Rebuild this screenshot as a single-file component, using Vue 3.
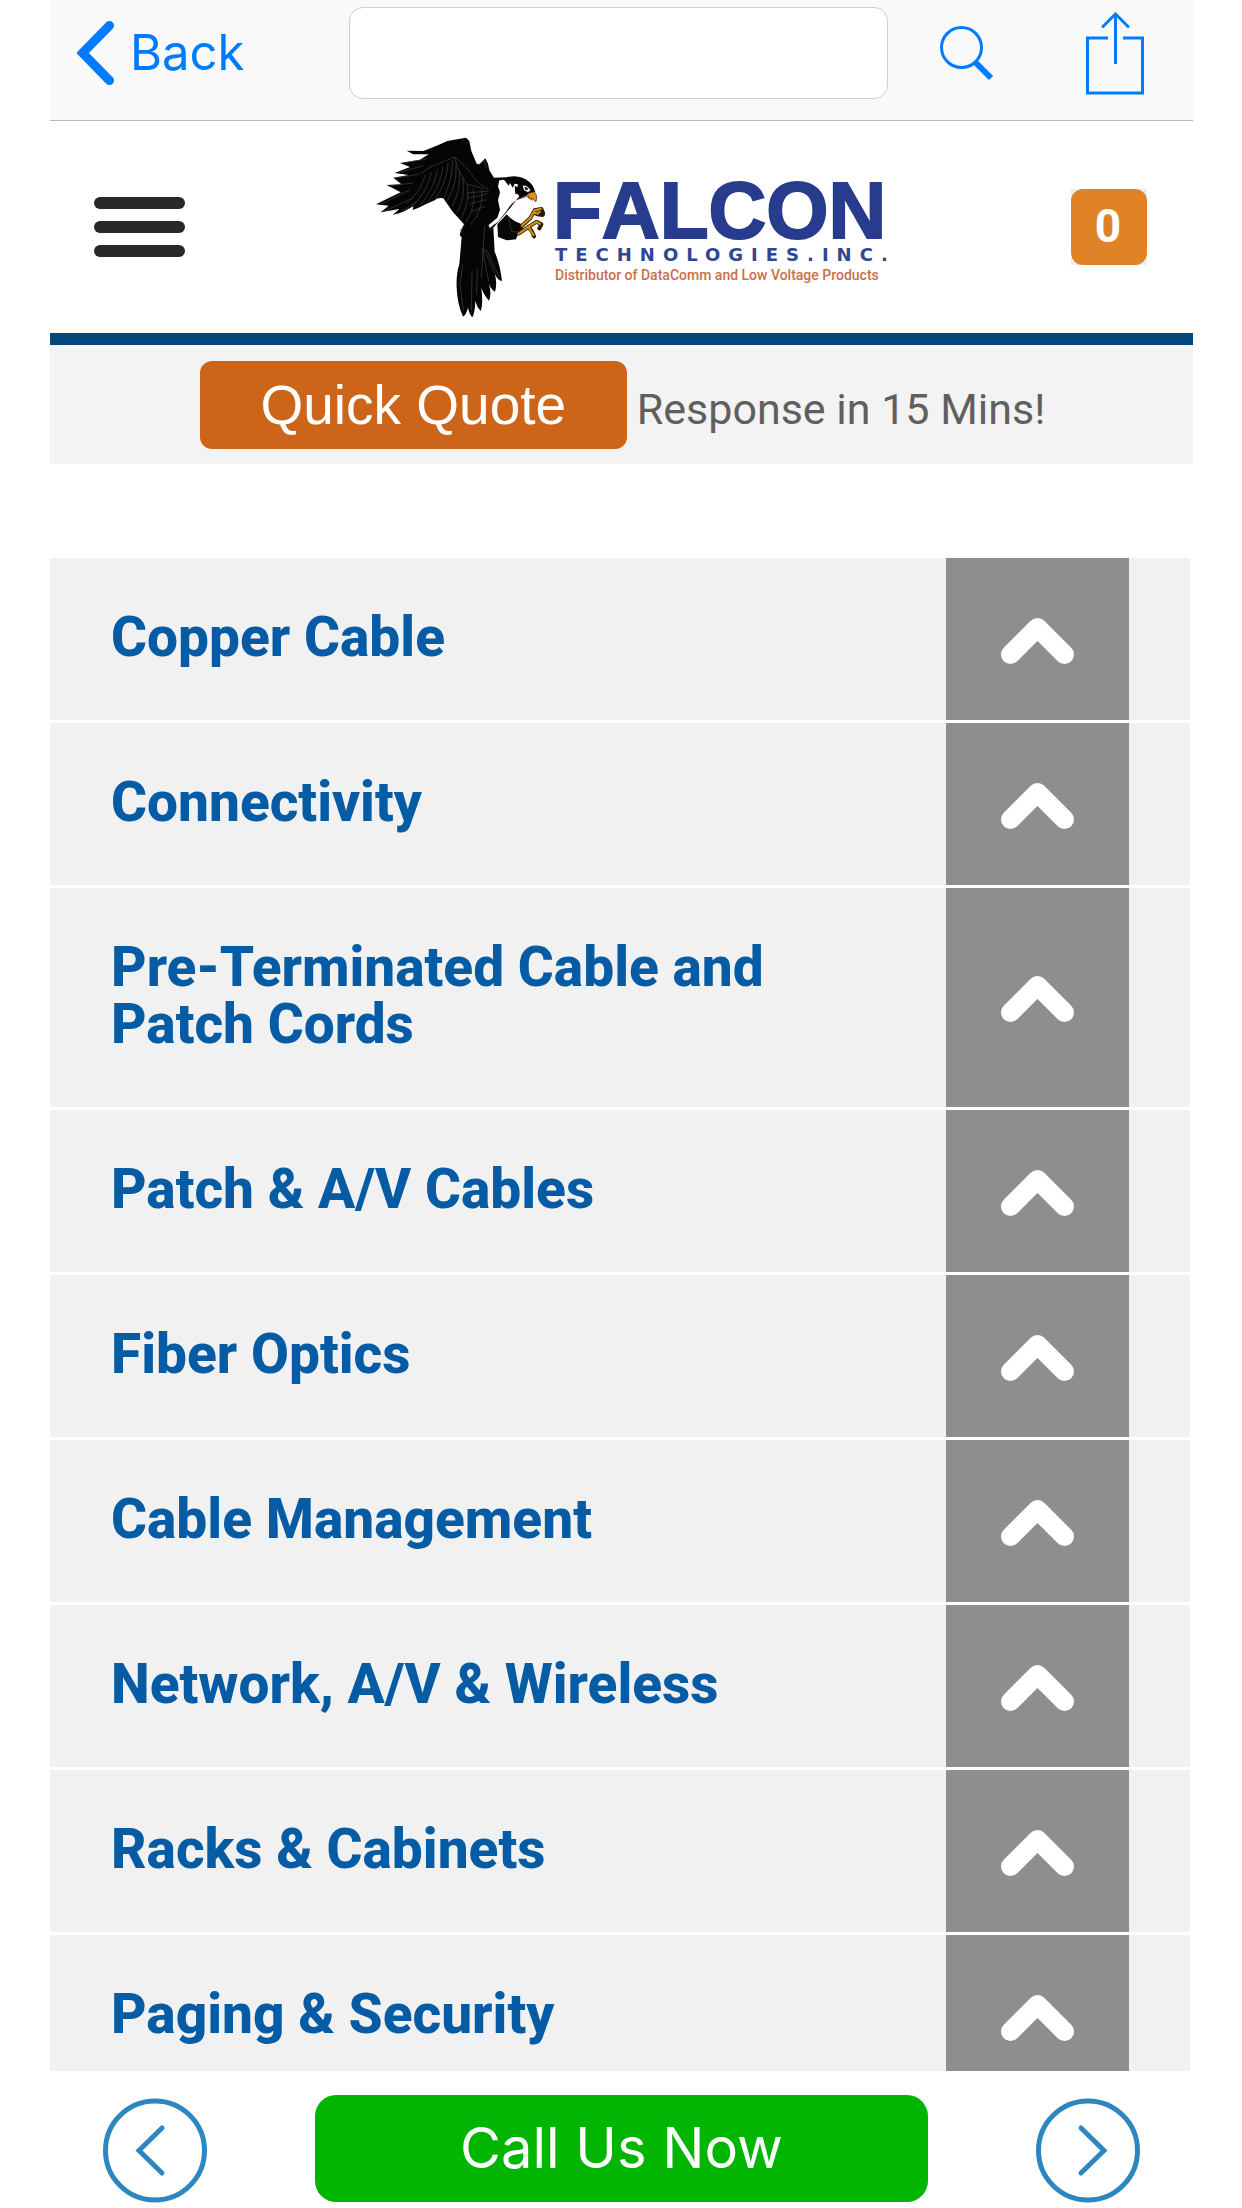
<script setup>
import { ref } from 'vue'

const query = ref('')
const cartCount = ref(0)
const categories = ref([
  'Copper Cable',
  'Connectivity',
  'Pre-Terminated Cable and Patch Cords',
  'Patch & A/V Cables',
  'Fiber Optics',
  'Cable Management',
  'Network, A/V & Wireless',
  'Racks & Cabinets',
  'Paging & Security',
])
</script>

<template>
  <div class="shell">
    <nav class="toolbar">
      <a class="back" href="#">
        <svg width="37" height="64" viewBox="0 0 37 64" aria-hidden="true">
          <path d="M32.500 4.500L5.500 32L32.500 59.500" fill="none" stroke="#007aff" stroke-width="9" stroke-linecap="round" />
        </svg>
        <span>Back</span>
      </a>
      <input v-model="query" class="field" type="text" aria-label="Address" />
      <button class="icon-btn" type="button" aria-label="Search">
        <svg width="54" height="55" viewBox="0 0 54 55" aria-hidden="true">
          <circle cx="21.500" cy="21.500" r="20" fill="none" stroke="#007aff" stroke-width="3" />
          <path d="M35 36L51 52" stroke="#007aff" stroke-width="6" />
        </svg>
      </button>
      <button class="icon-btn share" type="button" aria-label="Share">
        <svg width="58" height="83" viewBox="0 0 58 83" fill="none" stroke="#007aff" stroke-width="3" aria-hidden="true">
          <path d="M22 26H1.500V81H56.500V26H37M29.500 2V52" />
          <path d="M17 14.500L29.500 2L42 14.500" stroke-linecap="round" />
        </svg>
      </button>
    </nav>

    <main class="page">
      <header class="masthead">
        <button class="menu" type="button" aria-label="Menu">
          <i></i><i></i><i></i>
        </button>
        <a class="logo" href="#">
          <svg class="bird" width="170" height="182" viewBox="45 35 510 546" aria-hidden="true">
            <path d="M318 40L328 50L334 80L350 118L358 120L376 102L384 118L388 138L402 160L440 159Q470 150 496 164Q520 178 526 204L498 214L470 226L440 264L412 296L400 310L404 382Q420 420 426 470Q414 470 405 450Q412 480 405 502Q392 496 386 476Q396 510 387 529Q370 510 364 490Q370 540 362 560Q350 548 346 530Q345 565 337 579Q328 570 324 550Q318 572 309 577Q292 540 290 490Q288 450 298 420L305 338Q296 336 302 322L312 300L300 286L278 262L250 222Q234 218 224 228L200 238L176 250L158 257L160 246L130 262L98 272L118 254L62 264L86 244L48 240L80 224L122 204L80 182L124 180L100 160L146 152L104 146L150 128L120 116L180 106L206 90L160 90L140 79L190 80L230 64L262 50Z" fill="#050505" />
            <path d="M412 300L440 270Q456 290 486 300L492 322L474 330L468 345L440 348L414 338Z" fill="#080808" />
            <path d="M418 168L432 166L446 184L450 176L458 190L464 178L474 180L468 204L478 216L470 226Q450 240 440 260L414 292L388 312L386 302L412 280L420 256L414 228L420 204L414 186Z" fill="#fff" />
            <path d="M464 184L482 194L480 206L466 210" fill="#050505" />
            <path d="M488 184Q502 182 512 198L504 204L492 198Z" fill="#e9e9e9" />
            <path d="M494 188Q504 188 504 196L496 197Z" fill="#111" />
            <path d="M502 208L522 202Q534 212 528 232Q520 222 506 220Z" fill="#d9931d" stroke="#3a2605" stroke-width="2" />
            <path d="M470 226L500 216L518 228" fill="none" stroke="#7b3412" stroke-width="3" />
            <g fill="none" stroke-linecap="round" stroke-linejoin="round">
              <path d="M486 304L512 280L524 258L544 254L550 268M520 264L532 270L548 272M476 328L508 306L530 292L544 300L538 312M506 308L516 322L522 336" stroke="#2b1c04" stroke-width="12" />
              <path d="M486 304L512 280L524 258L542 254M520 264L534 268M476 328L508 306L530 292L540 298M506 308L514 322L520 332" stroke="#c98c16" stroke-width="7" />
            </g>
            <g fill="none" stroke="#444" stroke-width="2">
              <path d="M180 150L210 128L284 98L320 130L350 170L384 196M284 98L292 130L320 180L370 192" />
              <path d="M140 238Q182 200 196 152M156 246Q204 200 214 144M180 244Q224 190 232 138M204 232Q244 180 248 128M226 224Q262 170 264 116M252 220Q278 160 278 108M262 228Q292 180 288 120M276 248Q304 190 298 140M290 266Q318 220 308 160M304 282Q330 230 322 184M318 292Q348 250 340 192M332 300Q370 260 366 196" />
              <path d="M70 262L160 220M66 238L150 196M112 270L170 232M92 184L160 176M112 160L176 150M116 144L190 124M130 116L200 104M320 206L388 200M324 222L384 208M330 238L380 226M334 262L376 246" />
              <path d="M300 320L314 300M374 304L370 366L364 460M366 370L386 470M370 370L406 450M380 376L418 460M308 420L300 480L310 560M336 440L334 560M352 430L350 510M446 276L454 320L474 324M384 300L392 316L402 300M356 122L372 108L380 130" />
            </g>
          </svg>
          <span class="wordmark">
            <span class="name">FALCON</span>
            <span class="sub">TECHNOLOGIES.INC.</span>
            <span class="tagline">Distributor of DataComm and Low Voltage Products</span>
          </span>
        </a>
        <a class="cart" href="#" aria-label="Cart items"><span>{{ cartCount }}</span></a>
      </header>

      <section class="quote">
        <button class="quote-btn" type="button">Quick Quote</button>
        <span>Response in 15 Mins!</span>
      </section>

      <ul class="categories">
        <li v-for="name in categories" :key="name">
          <a href="#">{{ name }}</a>
          <button type="button" :aria-label="'Toggle ' + name">
            <svg width="74" height="46" viewBox="0 0 74 46" aria-hidden="true">
              <path d="M9.500 36.500L36.500 9.500L63.500 36.500" fill="none" stroke="#fff" stroke-width="19" stroke-linecap="round" stroke-linejoin="round" />
            </svg>
          </button>
        </li>
      </ul>
    </main>

    <footer class="bottom">
      <button class="round" type="button" aria-label="Previous">
        <svg width="104" height="105" viewBox="0 0 104 105" fill="none" stroke="#2e86c1" aria-hidden="true">
          <circle cx="52" cy="52.500" r="49.500" stroke-width="5" />
          <path d="M59 30L36 52.500L59 75" stroke-width="5" stroke-linecap="round" />
        </svg>
      </button>
      <a class="call" href="#">Call Us Now</a>
      <button class="round" type="button" aria-label="Next">
        <svg width="104" height="105" viewBox="0 0 104 105" fill="none" stroke="#2e86c1" aria-hidden="true">
          <circle cx="52" cy="52.500" r="49.500" stroke-width="5" />
          <path d="M45 30L68 52.500L45 75" stroke-width="5" stroke-linecap="round" />
        </svg>
      </button>
    </footer>
  </div>
</template>

<style>
body {
  background: #fff;
}
</style>

<style scoped>
.shell {
  display: flex;
  flex-direction: column;
  height: 100vh;
  padding: 0 49px 0 50px;
  box-sizing: border-box;
  font-family: Roboto, sans-serif;
}

button {
  border: 0;
  padding: 0;
  background: none;
  font: inherit;
}

a {
  text-decoration: none;
}

svg {
  display: block;
  flex: none;
}

.toolbar {
  flex: none;
  display: flex;
  align-items: center;
  box-sizing: border-box;
  height: 121px;
  padding: 0 49px 14px 27px;
  background: #f9f9f9;
  border-bottom: 1px solid #b7b7b7;
}

.back {
  display: flex;
  align-items: center;
  gap: 16px;
  width: 272px;
  color: #007aff;
  font-family: Inter, sans-serif;
  font-size: 49px;
  line-height: 60px;
}

.field {
  flex: 1;
  min-width: 0;
  height: 92px;
  box-sizing: border-box;
  border: 1px solid #cfcfcf;
  border-radius: 14px;
  background: #fff;
  padding: 0 24px;
  font: 48px Inter, sans-serif;
}

.icon-btn {
  margin-left: 52px;
}

.share {
  margin-left: 92px;
}

.page {
  flex: 1;
  min-height: 0;
  overflow-y: auto;
  scrollbar-width: none;
}

.masthead {
  display: flex;
  align-items: center;
  justify-content: space-between;
  box-sizing: border-box;
  height: 224px;
  padding: 0 46px 0 44px;
  border-bottom: 12px solid #05477d;
}

.menu {
  display: flex;
  flex-direction: column;
  gap: 12px;
  width: 91px;
}

.menu i {
  height: 12px;
  border-radius: 6px;
  background: #292929;
}

.logo {
  display: flex;
  align-items: center;
  gap: 8px;
  margin-left: 10px;
}

.wordmark {
  display: flex;
  flex-direction: column;
  width: 338px;
  padding-top: 8px;
  white-space: nowrap;
}

.name {
  color: #283c8e;
  font: bold 80px/72px "Liberation Sans", sans-serif;
  font-kerning: none;
  -webkit-text-stroke: 2px #283c8e;
}

.sub {
  padding-left: 2px;
  color: #2f4595;
  font: bold 18px/16px "DejaVu Sans", sans-serif;
  letter-spacing: 8px;
}

.tagline {
  padding-left: 2px;
  color: #c9704a;
  font-size: 14px;
  font-weight: 500;
  line-height: 24px;
}

.cart {
  width: 76px;
  height: 76px;
  background: #eee;
}

.cart span {
  display: block;
  border-radius: 12px;
  background: #e08326;
  color: #fff;
  font-size: 46px;
  font-weight: 700;
  line-height: 74px;
  padding: 0 2px 2px 0;
  text-align: center;
}

.quote {
  display: flex;
  align-items: baseline;
  justify-content: center;
  gap: 10px;
  box-sizing: border-box;
  height: 119px;
  padding: 16px 0 0 2px;
  background: #f3f3f3;
  color: #5f5f5f;
  font-size: 43px;
}

.quote-btn {
  width: 427px;
  height: 88px;
  border-radius: 12px;
  background: #cc641a;
  color: #fff;
  font: 55px/88px "Liberation Sans", sans-serif;
}

.categories {
  list-style: none;
  margin: 94px 3px 0 0;
  padding: 0;
}

.categories li {
  display: flex;
  margin-bottom: 3px;
  padding-right: 61px;
  background: #f1f1f1;
}

.categories a {
  flex: 1;
  padding: 51px 120px 54px 61px;
  color: #055ca5;
  font-size: 55px;
  font-weight: 800;
  line-height: 57px;
}

.categories button {
  display: flex;
  align-items: center;
  justify-content: center;
  width: 183px;
  padding-top: 3px;
  background: #8e8e8e;
}

.bottom {
  flex: none;
  display: flex;
  align-items: center;
  justify-content: space-between;
  box-sizing: border-box;
  height: 137px;
  padding: 18px 53px 0;
}

.round {
  padding-top: 4px;
}

.call {
  width: 613px;
  border-radius: 21px;
  background: #02b502;
  color: #fff;
  font: 56px/107px Inter, sans-serif;
  text-align: center;
}
</style>
